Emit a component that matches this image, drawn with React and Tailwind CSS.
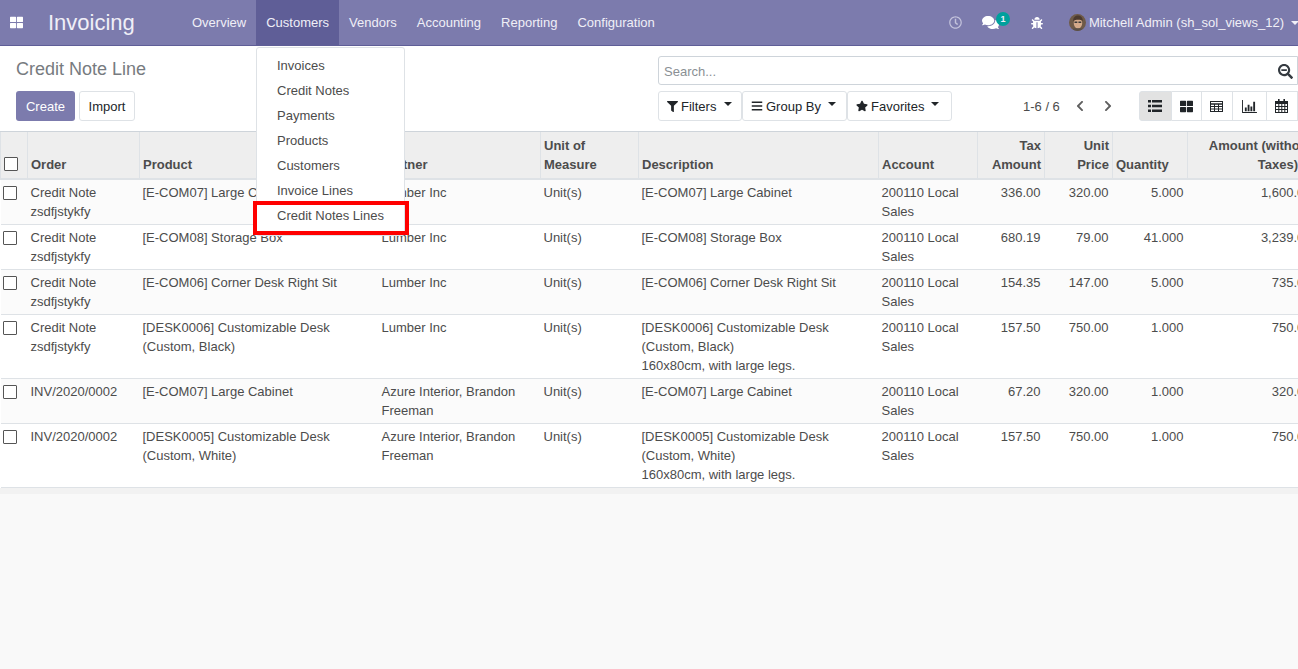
import { FaThLarge, FaRegClock, FaComments, FaBug, FaSearchMinus, FaFilter, FaBars, FaStar, FaChevronLeft, FaChevronRight } from 'react-icons/fa';

const menu = ['Overview', 'Customers', 'Vendors', 'Accounting', 'Reporting', 'Configuration'];
const customerMenu = ['Invoices', 'Credit Notes', 'Payments', 'Products', 'Customers', 'Invoice Lines', 'Credit Notes Lines'];

const rows = [
    { order: ['Credit Note', 'zsdfjstykfy'], product: ['[E-COM07] Large Cabinet'], partner: ['Lumber Inc'], desc: ['[E-COM07] Large Cabinet'], tax: '336.00', price: '320.00', qty: '5.000', amount: '1,600.00' },
    { order: ['Credit Note', 'zsdfjstykfy'], product: ['[E-COM08] Storage Box'], partner: ['Lumber Inc'], desc: ['[E-COM08] Storage Box'], tax: '680.19', price: '79.00', qty: '41.000', amount: '3,239.00' },
    { order: ['Credit Note', 'zsdfjstykfy'], product: ['[E-COM06] Corner Desk Right Sit'], partner: ['Lumber Inc'], desc: ['[E-COM06] Corner Desk Right Sit'], tax: '154.35', price: '147.00', qty: '5.000', amount: '735.00' },
    { order: ['Credit Note', 'zsdfjstykfy'], product: ['[DESK0006] Customizable Desk', '(Custom, Black)'], partner: ['Lumber Inc'], desc: ['[DESK0006] Customizable Desk', '(Custom, Black)', '160x80cm, with large legs.'], tax: '157.50', price: '750.00', qty: '1.000', amount: '750.00' },
    { order: ['INV/2020/0002'], product: ['[E-COM07] Large Cabinet'], partner: ['Azure Interior, Brandon', 'Freeman'], desc: ['[E-COM07] Large Cabinet'], tax: '67.20', price: '320.00', qty: '1.000', amount: '320.00' },
    { order: ['INV/2020/0002'], product: ['[DESK0005] Customizable Desk', '(Custom, White)'], partner: ['Azure Interior, Brandon', 'Freeman'], desc: ['[DESK0005] Customizable Desk', '(Custom, White)', '160x80cm, with large legs.'], tax: '157.50', price: '750.00', qty: '1.000', amount: '750.00' },
];

function Caret({ className = '' }) {
    return <span className={`inline-block w-0 h-0 border-x-[4px] border-x-transparent border-t-[4px] border-t-current ${className}`} />;
}

function Lines({ items }) {
    return items.map((line) => <div key={line}>{line}</div>);
}

function Check({ className = '' }) {
    return <div className={`w-[14px] h-[14px] bg-white border border-[#555] rounded-[1px] ${className}`} />;
}

function ListIcon() {
    return (
        <svg viewBox="0 0 14 12" className="w-[14px] h-[12px]" fill="#212529">
            <path d="M0 0h3v2.500H0zM4 0h10v2.500H4zM0 4.700h3v2.500H0zM4 4.700h10v2.500H4zM0 9.400h3v2.500H0zM4 9.400h10v2.500H4z" />
        </svg>
    );
}

function TableIcon() {
    return (
        <svg viewBox="0 0 13 11" className="w-[13px] h-[11px]" fill="none" stroke="#212529" strokeWidth="1">
            <rect x=".5" y=".5" width="12" height="10" />
            <path d="M.5 3h12" strokeWidth="1.500" />
            <path d="M.5 5.500h12M.5 8h12M4.500 3v7.500M8.500 3v7.500" />
        </svg>
    );
}

function BarChartIcon() {
    return (
        <svg viewBox="0 0 16 14" className="w-[15px] h-[13px]" fill="#212529">
            <path d="M0 0h1v13h15v1H0z" />
            <path d="M3 8h2v4H3zM6 5h2v7H6zM9 7h2v5H9zM12 2h2v10h-2z" />
        </svg>
    );
}

function CalendarIcon() {
    return (
        <svg viewBox="0 0 13 14" className="w-[13px] h-[14px]" fill="#212529">
            <path d="M3 0h1.600v2.500H3zM8.400 0H10v2.500H8.400z" />
            <path fillRule="evenodd" d="M0 2h13v12H0zM1 5v2h2.300V5zm3.300 0v2h2V5zm3 0v2h2V5zm3 0v2H12V5zM1 8v2h2.300V8zm3.300 0v2h2V8zm3 0v2h2V8zm3 0v2H12V8zM1 11v2h2.300v-2zm3.300 0v2h2v-2zm3 0v2h2v-2zm3 0v2H12v-2z" />
        </svg>
    );
}

function Avatar() {
    return (
        <svg viewBox="0 0 18 18" className="w-[17px] h-[17px] rounded-full">
            <rect width="18" height="18" fill="#6e5a48" />
            <ellipse cx="9.500" cy="9.500" rx="4.500" ry="6" fill="#d3a98a" />
            <path d="M4.500 7.500C4 3.500 7 1.500 9.500 1.500S15 3.500 14.500 7.500C12.500 5.500 7 5.500 4.500 7.500z" fill="#4b3a2e" />
            <path d="M5.800 8h3v1.500h-3zM10 8h3v1.500h-3z" fill="#3a3a3a" />
            <path d="M2 18c1-3 4-3 7.500-3s6 0 7 3z" fill="#5a5048" />
        </svg>
    );
}

export default function App() {
    return (
        <div className="w-[1298px] h-[669px] overflow-hidden flex flex-col bg-[#f9f9f9] text-[13px] leading-[19px] text-[#4c4c4c] font-['Liberation_Sans',Arial,sans-serif] relative">
            {/* Top navbar */}
            <nav className="h-[46px] shrink-0 flex items-stretch bg-[#7c7bad] border-b border-[#5f5e97] text-white">
                <div className="w-[32px] flex items-center justify-center">
                    <FaThLarge className="text-[13px]" />
                </div>
                <div className="w-[150px] pl-[16px] flex items-center text-[22px] font-normal text-[#f0eff7]">Invoicing</div>
                <ul className="flex">
                    {menu.map((item) => (
                        <li key={item} className={`px-[10px] flex items-center text-[#f0eff7] ${item === 'Customers' ? 'bg-[#5f5e97]' : ''}`}>
                            {item}
                        </li>
                    ))}
                </ul>
                <div className="ml-auto flex items-center text-[#f0eff7] -mr-[1px]">
                    <FaRegClock className="text-[13px] text-[#c4c3dc] mr-[20px]" />
                    <div className="relative mr-[32px]">
                        <FaComments className="text-[17px] text-white" />
                        <span className="absolute -top-[2px] left-[14px] w-[14px] h-[14px] rounded-full bg-[#00a09d] text-[9px] leading-[14px] text-center font-bold">1</span>
                    </div>
                    <FaBug className="text-[12px] text-white mr-[26px]" />
                    <Avatar />
                    <span className="ml-[3px] whitespace-nowrap">Mitchell Admin (sh_sol_views_12)</span>
                    <Caret className="ml-[7px]" />
                </div>
            </nav>

            {/* Customers dropdown */}
            <div className="absolute z-20 top-[47px] left-[256px] w-[149px] h-[189px] bg-white border border-[#dee2e6] rounded-[3px] pt-[5px]">
                {customerMenu.map((item) => (
                    <div key={item} className="h-[25px] pl-[20px] flex items-center text-[#4c4c4c]">{item}</div>
                ))}
                <div className="absolute left-[-4px] top-[153px] w-[156px] h-[34px] border-[4px] border-[#ff0000]" />
            </div>

            {/* Control panel */}
            <div className="h-[86px] shrink-0 bg-white border-b border-[#ced4da] flex justify-between pl-[16px]">
                <div>
                    <div className="mt-[13px] text-[18px] leading-[21px] text-[#777b80]">Credit Note Line</div>
                    <div className="mt-[11px] flex gap-[4px]">
                        <button className="h-[30px] w-[59px] bg-[#7c7bad] text-white rounded-[3px]">Create</button>
                        <button className="h-[30px] w-[56px] bg-white text-[#212529] border border-[#dee2e6] rounded-[3px]">Import</button>
                    </div>
                </div>
                <div className="w-[640px] pt-[10px]">
                    <div className="h-[29px] border border-[#ced4da] rounded-l-[3px] flex items-center justify-between pl-[5px] pr-[4px] text-[#8a8f94]">
                        <span className="mt-[1px]">Search...</span>
                        <FaSearchMinus className="text-[15px] text-[#343a40] mt-[1px]" />
                    </div>
                    <div className="mt-[6px] flex items-center">
                        <button className="h-[30px] w-[84px] shrink-0 border border-[#dee2e6] rounded-[3px] flex items-center pl-[8px] text-[#212529]">
                            <FaFilter className="text-[11px] mr-[3px]" />Filters<Caret className="ml-[8px] -mt-[4px]" />
                        </button>
                        <button className="h-[30px] w-[105px] shrink-0 border border-[#dee2e6] rounded-[3px] flex items-center pl-[8px] text-[#212529]">
                            <FaBars className="text-[12px] mr-[3px]" />Group By<Caret className="ml-[7px] -mt-[4px]" />
                        </button>
                        <button className="h-[30px] w-[105px] shrink-0 border border-[#dee2e6] rounded-[3px] flex items-center pl-[8px] text-[#212529]">
                            <FaStar className="text-[12px] mr-[3px]" />Favorites<Caret className="ml-[7px] -mt-[4px]" />
                        </button>
                        <span className="ml-[71px] text-[#4c4c4c] whitespace-nowrap">1-6 / 6</span>
                        <FaChevronLeft className="ml-[14px] text-[12px] text-[#5f5f5f] shrink-0" />
                        <FaChevronRight className="ml-[16px] text-[12px] text-[#5f5f5f] shrink-0" />
                        <div className="ml-[25px] flex h-[30px] text-[#212529] shrink-0">
                            <div className="w-[33px] bg-[#e2e2e2] border border-[#dee2e6] rounded-l-[3px] flex items-center justify-center"><ListIcon /></div>
                            <div className="w-[30px] border border-l-0 border-[#dee2e6] flex items-center justify-center"><FaThLarge className="text-[13px]" /></div>
                            <div className="w-[31px] border border-l-0 border-[#dee2e6] flex items-center justify-center"><TableIcon /></div>
                            <div className="w-[34px] border border-l-0 border-[#dee2e6] flex items-center justify-center"><BarChartIcon /></div>
                            <div className="w-[31px] border border-l-0 border-[#dee2e6] flex items-center justify-center"><CalendarIcon /></div>
                        </div>
                    </div>
                </div>
            </div>

            {/* List view */}
            <div className="w-[1298px] overflow-hidden bg-white">
                <table className="table-fixed w-[1315px] border-collapse">
                    <colgroup>
                        <col className="w-[27px]" />
                        <col className="w-[112px]" />
                        <col className="w-[239px]" />
                        <col className="w-[162px]" />
                        <col className="w-[98px]" />
                        <col className="w-[240px]" />
                        <col className="w-[99px]" />
                        <col className="w-[67px]" />
                        <col className="w-[68px]" />
                        <col className="w-[75px]" />
                        <col className="w-[128px]" />
                    </colgroup>
                    <thead>
                        <tr className="h-[47px] bg-[#eeeeee] border-b-[2px] border-[#dee2e6] font-bold text-[#4c4c4c] [&>th]:border-x [&>th]:border-[#dee2e6] [&>th]:pl-[3px] [&>th]:pr-[3px] [&>th]:pb-[4px] [&>th]:align-bottom">
                            <th><Check className="mb-[3px]" /></th>
                            <th className="text-left">Order</th>
                            <th className="text-left">Product</th>
                            <th className="text-left">Partner</th>
                            <th className="text-left">Unit of Measure</th>
                            <th className="text-left">Description</th>
                            <th className="text-left">Account</th>
                            <th className="text-right">Tax Amount</th>
                            <th className="text-right"><Lines items={['Unit', 'Price']} /></th>
                            <th className="text-left">Quantity</th>
                            <th className="text-right">
                                <div className="whitespace-nowrap">Amount (without</div>
                                <div className="pr-[14px]">Taxes)</div>
                            </th>
                        </tr>
                    </thead>
                    <tbody>
                        {rows.map((row, i) => (
                            <tr key={i} className={`${i % 2 === 0 ? 'bg-[#fbfbfb]' : 'bg-white'} border-b border-[#dee2e6] align-top [&>td]:pl-[3px] [&>td]:pr-[4px] [&>td]:py-[3px]`}>
                                <td><Check className="mt-[3px] -ml-[1px]" /></td>
                                <td><Lines items={row.order} /></td>
                                <td><Lines items={row.product} /></td>
                                <td><Lines items={row.partner} /></td>
                                <td>Unit(s)</td>
                                <td><Lines items={row.desc} /></td>
                                <td>200110 Local Sales</td>
                                <td className="text-right">{row.tax}</td>
                                <td className="text-right">{row.price}</td>
                                <td className="text-right">{row.qty}</td>
                                <td className="text-right">{row.amount}</td>
                            </tr>
                        ))}
                    </tbody>
                </table>
                <div className="h-[6px] bg-[#f2f2f2]" />
            </div>
        </div>
    );
}
